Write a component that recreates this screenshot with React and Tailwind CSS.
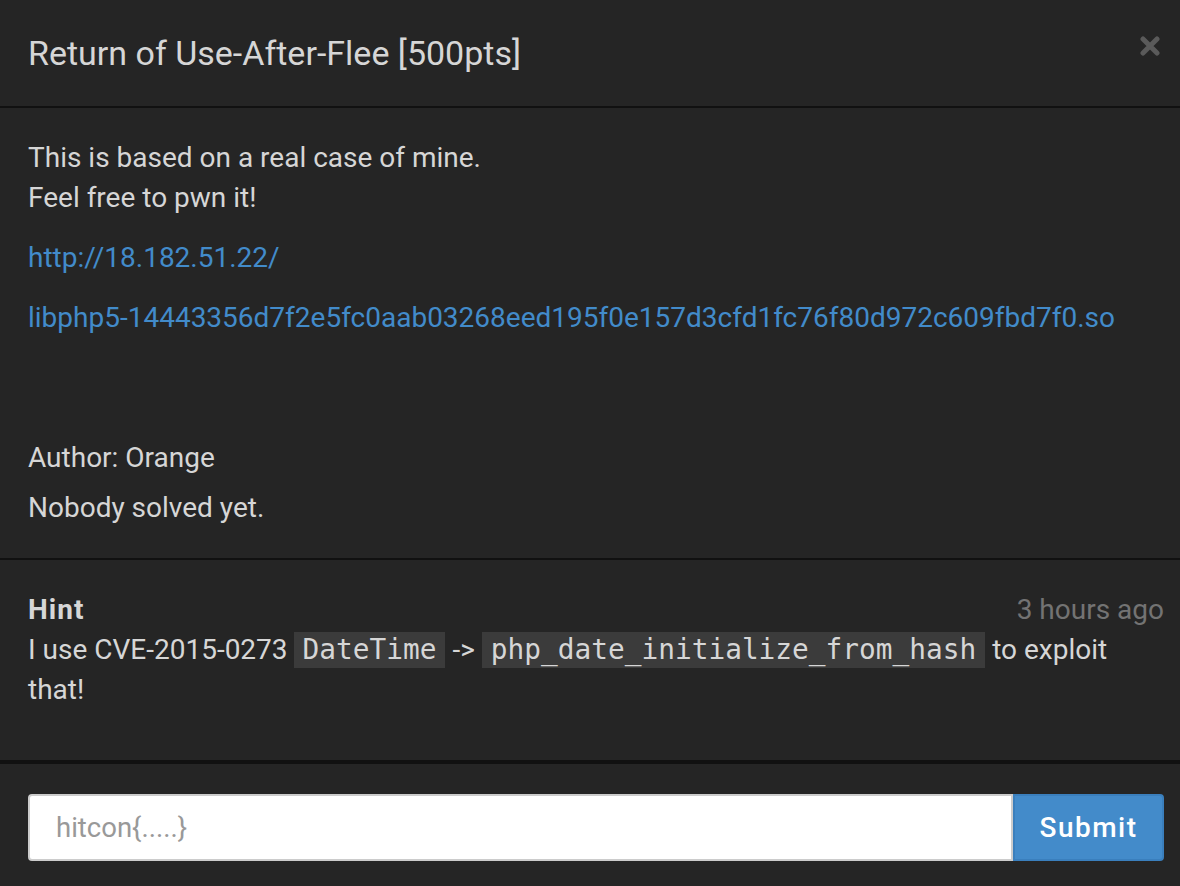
import React from "react";

export default function App() {
  const mono = { fontFamily: "'DejaVu Sans Mono', monospace" };
  return (
    <div
      className="w-[1180px] h-[886px] overflow-hidden bg-[#252525] text-[#d6d6d6]"
      style={{ fontFamily: "Roboto, 'Liberation Sans', sans-serif" }}
    >
      {/* Header */}
      <div className="flex items-start justify-between pl-[28px] pr-[19px] pt-[30px] pb-[30px] border-b-2 border-[#111111]">
        <h4 className="text-[34px] leading-[46px] font-normal text-[#d6d6d6]">
          Return of Use-After-Flee [500pts]
        </h4>
        <button className="mt-[5px] w-[22px] h-[22px] flex items-center justify-center">
          <svg width="20" height="20" viewBox="0 0 20 20">
            <path d="M3 3 L17 17 M17 3 L3 17" stroke="#5a5a5a" strokeWidth="5" strokeLinecap="round" />
          </svg>
        </button>
      </div>

      {/* Body */}
      <div className="pl-[28px] pr-[16px] pt-[30px] pb-[30px] border-b-2 border-[#111111] text-[28px] leading-[40px] font-normal">
        <p className="mb-[20px]">
          This is based on a real case of mine.
          <br />
          Feel free to pwn it!
        </p>
        <p className="mb-[20px]">
          <a className="text-[#428bca]">http://18.182.51.22/</a>
        </p>
        <p className="mb-[20px]">
          <a className="text-[#428bca]">
            libphp5-14443356d7f2e5fc0aab03268eed195f0e157d3cfd1fc76f80d972c609fbd7f0.so
          </a>
        </p>
        <div className="h-[80px]" />
        <p className="mb-[10px]">Author: Orange</p>
        <p>Nobody solved yet.</p>
      </div>

      {/* Hint */}
      <div className="pl-[28px] pr-[16px] pt-[30px] pb-[50px] border-b-4 border-[#111111] text-[28px] leading-[40px] font-normal">
        <div className="flex justify-between">
          <span className="font-bold tracking-[1px]">Hint</span>
          <span className="text-[#737373]">3 hours ago</span>
        </div>
        <p>
          I use CVE-2015-0273
          <code
            className="inline-block ml-[6px] mr-[7px] bg-[#3b3b3b] text-[#d6d6d6] text-[27.8px] leading-[36px] px-[9px] font-normal"
            style={mono}
          >
            DateTime
          </code>
          -&gt;
          <code
            className="inline-block ml-[7px] mr-[7px] bg-[#3b3b3b] text-[#d6d6d6] text-[27.8px] leading-[36px] px-[9px] font-normal"
            style={mono}
          >
            php_date_initialize_from_hash
          </code>
          to exploit that!
        </p>
      </div>

      {/* Footer */}
      <div className="pl-[28px] pr-[16px] pt-[30px] flex">
        <input
          className="flex-1 h-[67px] bg-white border-2 border-[#cccccc] rounded-l-[4px] px-[26px] text-[27.5px] text-[#555] placeholder:text-[#999999] outline-none"
          placeholder="hitcon{.....}"
          style={{ fontFamily: "Roboto, 'Liberation Sans', sans-serif" }}
        />
        <button className="w-[151px] h-[67px] bg-[#438bca] border-2 border-[#3a7fbd] rounded-r-[4px] text-white text-[28px] font-medium tracking-[1.5px]">
          Submit
        </button>
      </div>
    </div>
  );
}
